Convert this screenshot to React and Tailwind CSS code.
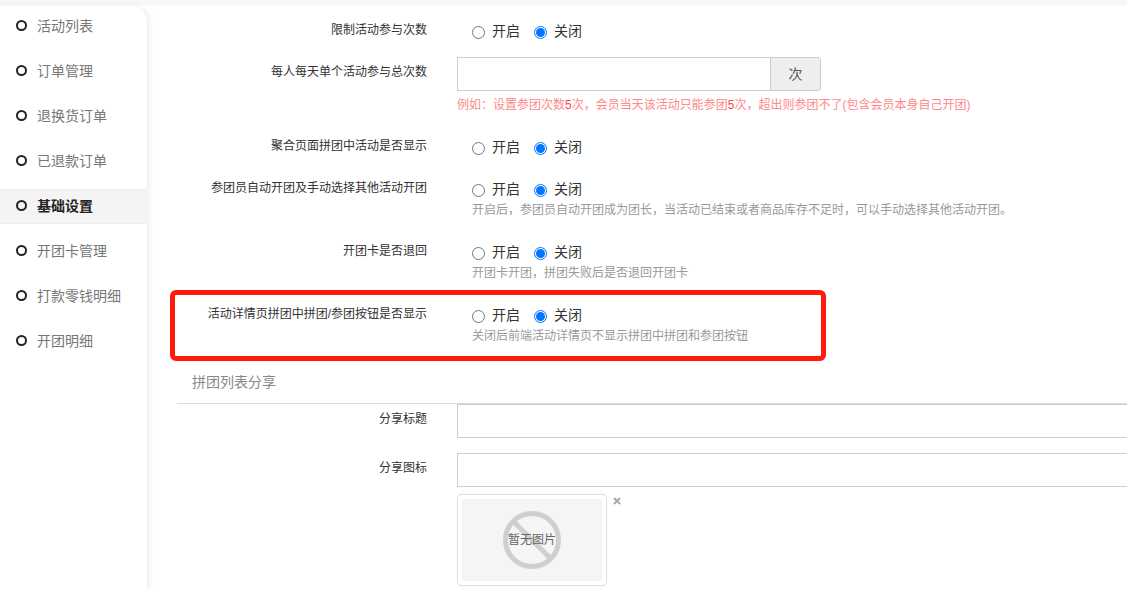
const font = { fontFamily: '"Liberation Sans", "Noto Sans CJK SC", sans-serif' };

const nav = ['活动列表', '订单管理', '退换货订单', '已退款订单', '基础设置', '开团卡管理', '打款零钱明细', '开团明细'];

function Radio({ checked, label }) {
  return (
    <span className="flex items-center">
      <span className={`flex h-[13px] w-[13px] items-center justify-center rounded-full border bg-white ${checked ? 'border-[#0075ff]' : 'border-[#767676]'}`}>
        {checked && <span className="h-[9px] w-[9px] rounded-full bg-[#0075ff]" />}
      </span>
      <span className="ml-[7px] pb-[2px] text-sm leading-5 text-[#333]">{label}</span>
    </span>
  );
}

function Row({ label, hint, className }) {
  return (
    <div className={`flex ${className}`}>
      <div className="-mt-[2px] w-[250px] text-right text-xs leading-5 text-[#333]">{label}</div>
      <div className="ml-[45px]">
        <div className="flex h-5 items-center gap-[14px]">
          <Radio label="开启" />
          <Radio checked label="关闭" />
        </div>
        {hint && <div className="mt-[1px] text-xs leading-[18px] text-[#999]">{hint}</div>}
      </div>
    </div>
  );
}

export default function App() {
  return (
    <div style={font} className="relative h-[590px] w-[1127px] overflow-hidden bg-white">
      <div className="h-[5px] bg-[#f7f7f7]" />
      <div className="flex h-[585px]">
        <aside className="mt-[1px] w-[147px] shrink-0 rounded-tr-[16px] bg-white shadow-[2px_0_6px_rgba(0,0,0,0.08)]">
          {nav.map((n, i) => (
            <div
              key={n}
              className={`flex h-[35px] items-center pb-[2px] pl-[16px] ${i > 0 ? 'mt-[10px]' : 'mt-[3px]'} ${i === 4 ? 'border-y border-[#ececec] bg-[#f4f4f4] font-bold text-[#222]' : 'text-[#777]'}`}
            >
              <span className="h-[11px] w-[11px] rounded-full border-2 border-[#222]" />
              <span className="ml-[10px] text-sm leading-5">{n}</span>
            </div>
          ))}
        </aside>
        <main className="min-w-0 flex-1 pl-[30px]">
          <Row className="mt-[17px]" label="限制活动参与次数" />
          <div className="mt-[15px] flex">
            <div className="w-[250px] pt-[5px] text-right text-xs leading-5 text-[#333]">每人每天单个活动参与总次数</div>
            <div className="ml-[30px]">
              <div className="flex h-[34px] w-[364px]">
                <div className="flex-1 border border-r-0 border-[#ccc] bg-white" />
                <div className="flex w-[51px] items-center justify-center rounded-r-[3px] border border-[#ccc] bg-[#eee] text-sm text-[#555]">次</div>
              </div>
              <div className="mt-[5px] whitespace-nowrap text-xs leading-[18px] text-[#f88]">
                例如：设置参团次数<span className="text-[#f44]">5</span>次，会员当天该活动只能参团<span className="text-[#f44]">5</span>次，超出则参团不了(包含会员本身自己开团)
              </div>
            </div>
          </div>
          <Row className="mt-[24px]" label="聚合页面拼团中活动是否显示" />
          <Row className="mt-[22px]" label="参团员自动开团及手动选择其他活动开团" hint="开启后，参团员自动开团成为团长，当活动已结束或者商品库存不足时，可以手动选择其他活动开团。" />
          <Row className="mt-[24px]" label="开团卡是否退回" hint="开团卡开团，拼团失败后是否退回开团卡" />
          <Row className="mt-[24px]" label="活动详情页拼团中拼团/参团按钮是否显示" hint="关闭后前端活动详情页不显示拼团中拼团和参团按钮" />
          <div className="mt-[27px] border-b border-[#ddd] pb-[11px] pl-[15px] text-sm leading-5 text-[#888]">拼团列表分享</div>
          <div className="flex">
            <div className="w-[250px] pt-[5px] text-right text-xs leading-5 text-[#333]">分享标题</div>
            <div className="ml-[30px] h-[34px] flex-1 border border-r-0 border-[#ccc]" />
          </div>
          <div className="mt-[15px] flex">
            <div className="w-[250px] pt-[5px] text-right text-xs leading-5 text-[#333]">分享图标</div>
            <div className="ml-[30px] h-[34px] flex-1 border border-r-0 border-[#ccc]" />
          </div>
          <div className="ml-[280px] mt-[7px] flex items-start">
            <div className="flex h-[92px] w-[150px] items-center justify-center rounded-[4px] border border-[#ddd] bg-white p-[4px]">
              <div className="relative flex h-[82px] w-[140px] items-center justify-center bg-[#f5f5f5]">
                <svg width="60" height="60" viewBox="0 0 60 60" className="absolute left-[40px] top-[11px]">
                  <circle cx="30" cy="30" r="26.5" fill="none" stroke="#cfcfcf" strokeWidth="5" />
                  <line x1="11" y1="11" x2="49" y2="49" stroke="#cfcfcf" strokeWidth="5" />
                </svg>
                <span className="relative text-xs text-[#666]">暂无图片</span>
              </div>
            </div>
            <svg width="8" height="8" viewBox="0 0 8 8" className="ml-[6px] mt-[3px]">
              <path d="M1 1L7 7M7 1L1 7" stroke="#aaa" strokeWidth="2" />
            </svg>
          </div>
        </main>
      </div>
      <div className="absolute left-[170px] top-[290px] h-[71px] w-[656px] rounded-[6px] border-[5px] border-[#ff1a0d]" />
    </div>
  );
}
